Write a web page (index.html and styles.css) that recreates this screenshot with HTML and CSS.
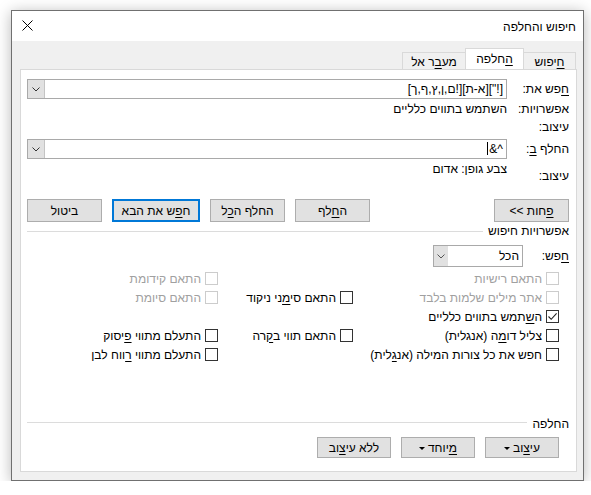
FILE: index.html
```html
<!DOCTYPE html>
<html lang="he">
<head>
<meta charset="utf-8">
<title>חיפוש והחלפה</title>
<link rel="stylesheet" href="styles.css">
</head>
<body>
<div class="dialog" dir="rtl">
  <div class="titlebar">
    <span class="title">חיפוש והחלפה</span>
    <span class="close"><svg width="11" height="11" viewBox="0 0 11 11"><path d="M0.5 0.5L10.5 10.5M10.5 0.5L0.5 10.5" stroke="#000" stroke-width="1"/></svg></span>
  </div>
  <div class="tabs">
    <div class="tab tab-1"><span><u>ח</u>יפוש</span></div>
    <div class="tab tab-2 active"><span><u>ה</u>חלפה</span></div>
    <div class="tab tab-3"><span>מע<u>ב</u>ר אל</span></div>
  </div>
  <div class="panel">
    <div class="field-row find-row">
      <span class="lbl"><u>ח</u>פש את:</span>
      <div class="combo">
        <span class="combo-text">[!"][א-ת][!ם,ן,ץ,ף,ך]</span>
        <span class="combo-btn"><svg width="8" height="5" viewBox="0 0 8 5"><path d="M0.5 0.5L4 4L7.5 0.5" fill="none" stroke="#333" stroke-width="1"/></svg></span>
      </div>
    </div>
    <div class="info-row opts">
      <span class="lbl">אפשרויות:</span>
      <span class="val">השתמש בתווים כלליים</span>
    </div>
    <div class="info-row fmt1">
      <span class="lbl">עיצוב:</span>
    </div>
    <div class="field-row replace-row">
      <span class="lbl">החלף <u>ב</u>:</span>
      <div class="combo">
        <span class="combo-text">^&amp;<span class="caret"></span></span>
        <span class="combo-btn"><svg width="8" height="5" viewBox="0 0 8 5"><path d="M0.5 0.5L4 4L7.5 0.5" fill="none" stroke="#333" stroke-width="1"/></svg></span>
      </div>
    </div>
    <div class="info-row fmt2">
      <span class="lbl lower">עיצוב:</span>
      <span class="val">צבע גופן: אדום</span>
    </div>
    <div class="actions">
      <button class="btn" dir="ltr">&lt;&lt; <u>פ</u>חות</button>
      <div class="actions-group">
        <button class="btn">ה<u>ח</u>לף</button>
        <button class="btn">החלף ה<u>כ</u>ל</button>
        <button class="btn btn-default">ח<u>פ</u>ש את הבא</button>
        <button class="btn">ביטול</button>
      </div>
    </div>
    <div class="section-head search-head">
      <span>אפשרויות חיפוש</span><span class="rule"></span>
    </div>
    <div class="search-row">
      <span class="lbl-s"><u>ח</u>פש:</span>
      <div class="select">
        <span class="combo-text">הכל</span>
        <span class="select-btn"><svg width="8" height="5" viewBox="0 0 8 5"><path d="M0.5 0.5L4 4L7.5 0.5" fill="none" stroke="#555" stroke-width="1"/></svg></span>
      </div>
    </div>
    <div class="checks">
      <label class="chk disabled"><span class="box"></span><span>התאם רישיות</span></label>
      <span></span>
      <label class="chk disabled"><span class="box"></span><span>התאם קידומת</span></label>

      <label class="chk disabled"><span class="box"></span><span>אתר מילים שלמות בלבד</span></label>
      <label class="chk"><span class="box"></span><span>התאם סי<u>מ</u>ני ניקוד</span></label>
      <label class="chk disabled"><span class="box"></span><span>התאם סיומת</span></label>

      <label class="chk"><span class="box"><svg width="11" height="11" viewBox="0 0 11 11"><path d="M1.5 5.5L4.2 8.3L9.6 2.4" fill="none" stroke="#222" stroke-width="1.1"/></svg></span><span>ה<u>ש</u>תמש בתווים כלליים</span></label>
      <span></span>
      <span></span>

      <label class="chk"><span class="box"></span><span>צליל דו<u>מ</u>ה (אנגלית)</span></label>
      <label class="chk"><span class="box"></span><span>התאם תווי ב<u>ק</u>רה</span></label>
      <label class="chk"><span class="box"></span><span>התעלם מתווי <u>פ</u>יסוק</span></label>

      <label class="chk"><span class="box"></span><span>חפש את כל צורות המילה (אנ<u>ג</u>לית)</span></label>
      <span></span>
      <label class="chk"><span class="box"></span><span>התעלם מתווי <u>ר</u>ווח לבן</span></label>
    </div>
    <div class="bottom">
      <div class="section-head replace-head">
        <span>החלפה</span><span class="rule"></span>
      </div>
      <div class="bottom-actions">
        <button class="btn btn-s">עי<u>צ</u>וב<span class="tri"></span></button>
        <button class="btn btn-s"><u>מ</u>יוחד<span class="tri"></span></button>
        <button class="btn btn-s">ללא עי<u>צ</u>וב</button>
      </div>
    </div>
  </div>
</div>
</body>
</html>
```

FILE: styles.css
```css
* { box-sizing: border-box; }

body {
  margin: 0;
  background: #ffffff;
  font-family: "Liberation Sans", "DejaVu Sans", sans-serif;
  font-size: 12px;
  color: #000;
}

u { text-decoration: underline; text-underline-offset: 2px; }

.dialog {
  margin: 10px auto 0 11px;
  width: 573px;
  height: 471px;
  border: 1px solid #707070;
  background: #f0f0f0;
  box-shadow: 0 2px 14px rgba(0, 0, 0, 0.28);
  display: flex;
  flex-direction: column;
}

.titlebar {
  height: 30px;
  background: #ffffff;
  display: flex;
  align-items: center;
  justify-content: space-between;
  padding: 0 7px 0 10px;
}
.title { font-size: 12px; padding-top: 1px; }
.close { display: flex; margin-top: -1px; }

.tabs {
  height: 28px;
  display: flex;
  align-items: flex-end;
  padding-right: 7px;
}
.tab {
  height: 17px;
  border: 1px solid #d9d9d9;
  border-bottom: none;
  background: #f0f0f0;
  display: flex;
  align-items: center;
  justify-content: center;
  padding-top: 1px;
}
.tab-1 { width: 52px; border-left: none; }
.tab-2 { width: 59px; }
.tab-3 { width: 63px; border-right: none; }
.tab.active {
  height: 22px;
  margin-bottom: -1px;
  background: #ffffff;
  padding-top: 0;
  padding-bottom: 2px;
}

.panel {
  flex: 1;
  margin: 0 6px 8px 8px;
  border: 1px solid #d9d9d9;
  background: #ffffff;
  padding: 0 7px 0 6px;
  display: flex;
  flex-direction: column;
}

.lbl { width: 62px; flex: none; white-space: nowrap; }

.field-row {
  display: flex;
  align-items: center;
  height: 20px;
}
.find-row { margin-top: 9px; }
.replace-row { margin-top: 4px; }

.combo {
  flex: 1;
  height: 20px;
  border: 1px solid #a9a9a9;
  display: flex;
  align-items: center;
}
.combo-text {
  flex: 1;
  padding-right: 3px;
  white-space: nowrap;
}
.caret {
  display: inline-block;
  width: 1px;
  height: 13px;
  background: #000;
  margin-right: 1px;
  vertical-align: -2px;
}
.combo-btn {
  width: 17px;
  height: 18px;
  background: #e1e1e1;
  border-right: 1px solid #c4c4c4;
  display: flex;
  align-items: center;
  justify-content: center;
}

.info-row {
  display: flex;
  line-height: 16px;
  height: 16px;
}
.opts { margin-top: 2px; }
.fmt1 { margin-top: 2px; }
.fmt2 { margin-top: 2px; height: 23px; }
.lbl.lower { padding-top: 7px; }
.val { white-space: nowrap; }

.actions {
  margin-top: 15px;
  display: flex;
  justify-content: space-between;
}
.actions-group { display: flex; gap: 10px; }

.btn {
  font: inherit;
  color: #000;
  height: 23px;
  width: 75px;
  padding: 0;
  background: #e1e1e1;
  border: 1px solid #adadad;
  text-align: center;
  white-space: nowrap;
}
.btn-default { width: 88px; border: 2px solid #0078d7; }

.section-head {
  display: flex;
  align-items: center;
  line-height: 16px;
  height: 16px;
  white-space: nowrap;
}
.rule {
  flex: 1;
  height: 1px;
  background: #dcdcdc;
  margin-right: 5px;
}
.search-head { margin-top: 1px; }
.replace-head .rule { margin-top: -3px; }

.search-row {
  margin-top: 6px;
  display: flex;
  align-items: center;
}
.lbl-s { width: 46px; flex: none; }
.select {
  width: 90px;
  height: 22px;
  border: 1px solid #a9a9a9;
  display: flex;
  align-items: center;
}
.select-btn {
  width: 14px;
  height: 20px;
  background: #e1e1e1;
  display: flex;
  align-items: center;
  justify-content: center;
}

.checks {
  margin-top: 2px;
  padding-right: 10px;
  display: grid;
  grid-template-columns: 206px 135px 1fr;
  grid-auto-rows: 19px;
}
.chk {
  display: flex;
  align-items: center;
  gap: 4px;
  white-space: nowrap;
}
.box {
  width: 13px;
  height: 13px;
  flex: none;
  border: 1px solid #333333;
  background: #fff;
  display: flex;
  align-items: center;
  justify-content: center;
}
.chk.disabled { color: #a0a0a0; }
.chk.disabled .box { border-color: #cccccc; }

.bottom {
  margin-top: auto;
  padding-bottom: 13px;
}
.bottom-actions {
  margin-top: 5px;
  padding-right: 10px;
  display: flex;
  gap: 10px;
}
.btn-s { width: 74px; height: 21px; }
.tri {
  display: inline-block;
  width: 0;
  height: 0;
  border-left: 3px solid transparent;
  border-right: 3px solid transparent;
  border-top: 3px solid #000;
  margin-right: 3px;
  vertical-align: 2px;
}
```
